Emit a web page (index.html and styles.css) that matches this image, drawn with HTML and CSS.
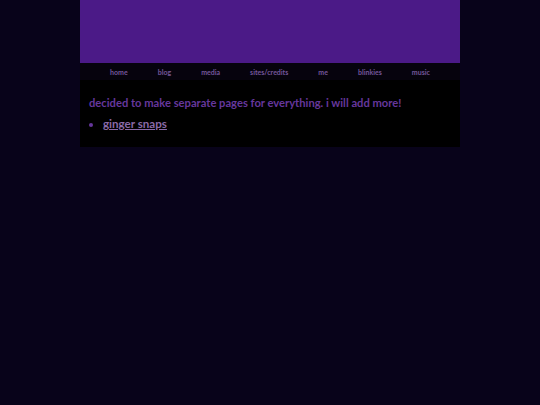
FILE: index.html
```html
<!DOCTYPE html>
<html>
<head>
<meta charset="utf-8">
<link rel="stylesheet" href="styles.css">
</head>
<body>
<div class="page">
  <header class="banner"></header>
  <nav class="nav">
    <a href="#">home</a>
    <a href="#">blog</a>
    <a href="#">media</a>
    <a href="#">sites/credits</a>
    <a href="#">me</a>
    <a href="#">blinkies</a>
    <a href="#">music</a>
  </nav>
  <main class="content">
    <p class="intro">decided to make separate pages for everything. i will add more!</p>
    <ul class="list">
      <li><a href="#">ginger snaps</a></li>
    </ul>
  </main>
</div>
</body>
</html>
```
FILE: styles.css
```css
html, body {
  margin: 0;
  padding: 0;
}
body {
  background: #08031a;
  font-family: Lato, "Noto Sans", sans-serif;
  min-height: 405px;
}
.page {
  width: 380px;
  margin: 0 auto;
}
.banner {
  height: 63px;
  background: #4b1a87;
}
.nav {
  height: 17px;
  background: #06030d;
  display: flex;
  justify-content: space-evenly;
  align-items: center;
}
.nav a {
  font-size: 7px;
  font-weight: 700;
  color: #74569a;
  text-decoration: none;
}
.content {
  background: #000;
  padding: 16px 9px 17px;
}
.intro {
  margin: 0;
  font-size: 11.2px;
  font-weight: 700;
  color: #66379c;
}
.list {
  margin: 8px 0 0;
  padding: 0 0 0 14px;
  color: #66379c;
  font-size: 11.6px;
  font-weight: 700;
}
.list a {
  color: #8a6aa8;
  text-decoration: underline;
}
```
